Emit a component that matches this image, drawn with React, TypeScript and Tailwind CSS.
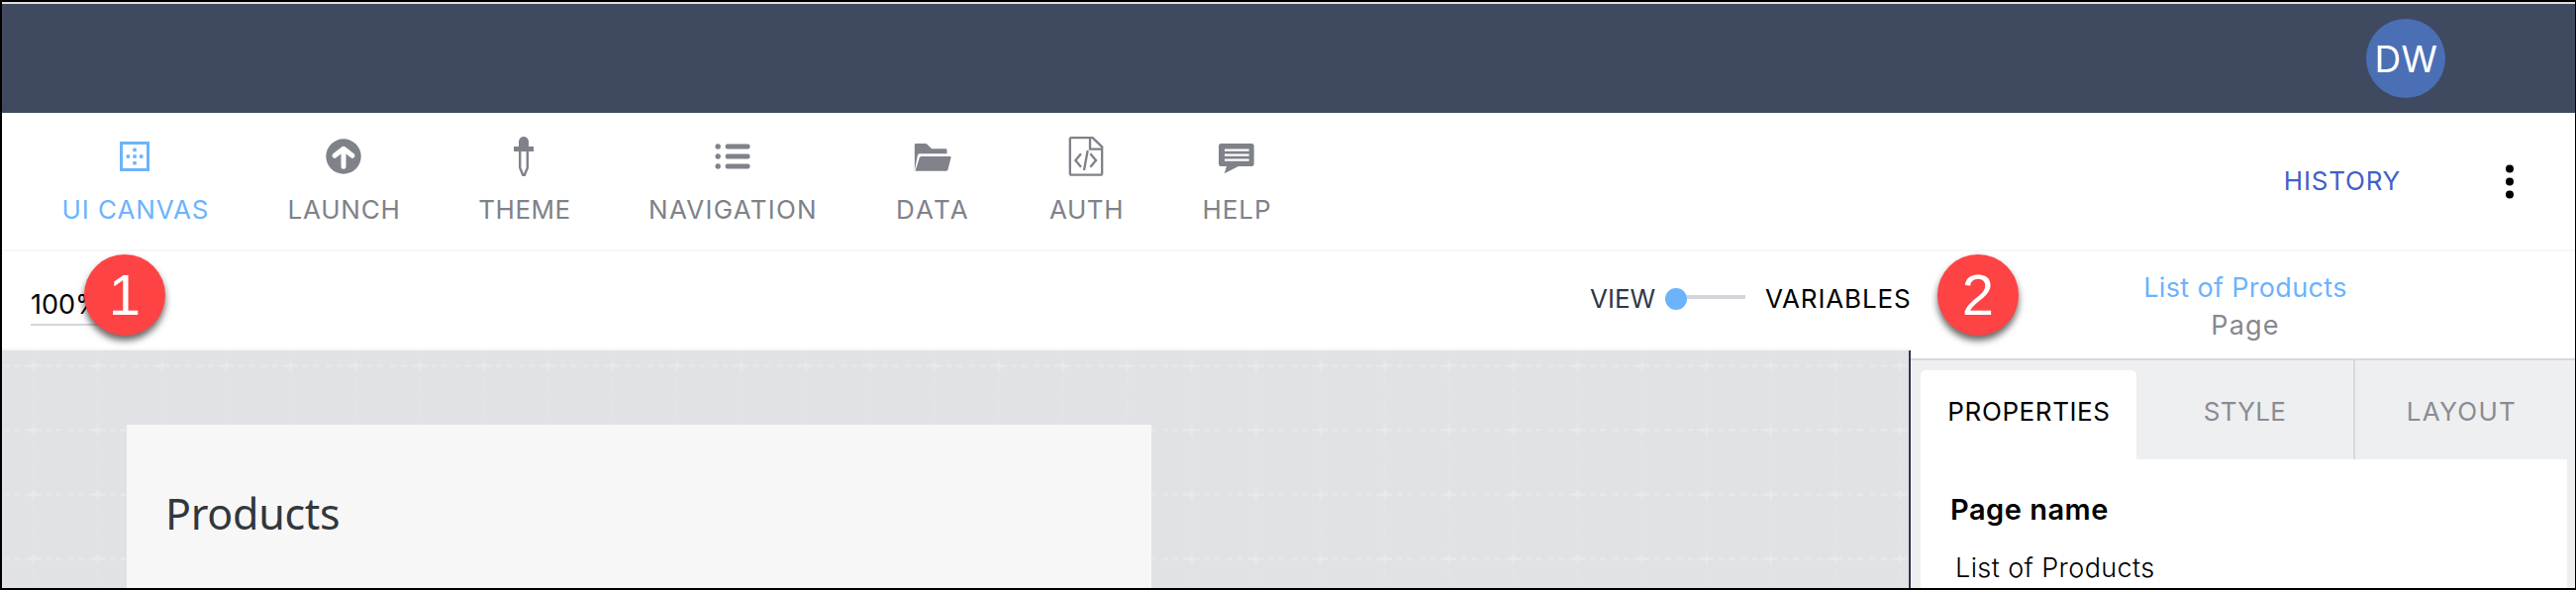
import type { ReactNode } from 'react';

const grey = '#7f8289';

function Icon({ children }: { children: ReactNode }) {
  return (
    <svg width="40" height="40" viewBox="0 0 40 40" fill="none" className="shrink-0">
      {children}
    </svg>
  );
}

const canvasIcon = (
  <Icon>
    <rect x="6.5" y="6.5" width="27" height="27" stroke="#6db3fb" strokeWidth="3" />
    <g fill="#6db3fb">
      <rect x="18.3" y="11.6" width="3.5" height="3.5" />
      <rect x="11.6" y="18.3" width="3.5" height="3.5" />
      <rect x="18.3" y="18.3" width="3.5" height="3.5" />
      <rect x="25" y="18.3" width="3.5" height="3.5" />
      <rect x="18.3" y="25" width="3.5" height="3.5" />
    </g>
  </Icon>
);

const launchIcon = (
  <Icon>
    <circle cx="20" cy="20" r="17.7" fill={grey} />
    <path d="M11 19.3 20 12.3 29 19.3M20 13V30.3" stroke="#fff" strokeWidth="5" strokeLinecap="round" strokeLinejoin="round" />
  </Icon>
);

const themeIcon = (
  <Icon>
    <path d="M10 10H15V5a5 5 0 0 1 10 0V10H30V15H10Z" fill={grey} />
    <path d="M16.2 14V31.5L19.2 38.8H20.8L23.8 31.5V14" stroke={grey} strokeWidth="2.4" />
  </Icon>
);

const navigationIcon = (
  <Icon>
    <g fill={grey}>
      <circle cx="5.2" cy="10" r="2.7" />
      <circle cx="5.2" cy="20" r="2.7" />
      <circle cx="5.2" cy="30" r="2.7" />
      <rect x="12.7" y="7.4" width="24.8" height="5.2" rx="2" />
      <rect x="12.7" y="17.4" width="24.8" height="5.2" rx="2" />
      <rect x="12.7" y="27.4" width="24.8" height="5.2" rx="2" />
    </g>
  </Icon>
);

const dataIcon = (
  <Icon>
    <g transform="scale(.33333) translate(-127.5 -84)" fill={grey}>
      <path d="M133 188V109Q133 105 137 105H166Q169 105 171 107L185 121H227Q231 121 231 125V136H148Q143 136 142 141L134 182Z" />
      <path d="M154 144H240Q244 144 243 148L234 184Q233 188 229 188H135L148 148Q150 144 154 144Z" />
    </g>
  </Icon>
);

const authIcon = (
  <Icon>
    <g transform="scale(.33333) translate(-592 -84)" stroke={grey} strokeWidth="7">
      <path d="M607 87.500H672L700.500 115V195Q700.500 200 695 200H608Q603.500 200 603.500 195V92Q603.500 87.500 607 87.500Z" />
      <path d="M664 88V122H700" />
      <path d="M637 136 620 156 637 176M665 136 682 156 665 176M657 126 646 186" />
    </g>
  </Icon>
);

const helpIcon = (
  <Icon>
    <g transform="scale(.33333) translate(-1047 -84)">
      <path d="M1060 105H1153Q1160 105 1160 112V167Q1160 174 1153 174H1113L1070 196 1077 174H1060Q1053 174 1053 167V112Q1053 105 1060 105Z" fill={grey} />
      <path d="M1071 125H1145M1071 140H1145M1071 155H1145" stroke="#fff" strokeWidth="7" />
    </g>
  </Icon>
);

const tools = [
  { label: 'UI CANVAS', icon: canvasIcon, cls: 'w-[148px] tracking-[0.94px] text-[#6db3fb]' },
  { label: 'LAUNCH', icon: launchIcon, cls: 'w-[113px] tracking-[0.79px] text-[#7f8289]' },
  { label: 'THEME', icon: themeIcon, cls: 'w-[92px] tracking-[0.5px] text-[#7f8289]' },
  { label: 'NAVIGATION', icon: navigationIcon, cls: 'w-[169px] tracking-[1.24px] text-[#7f8289]' },
  { label: 'DATA', icon: dataIcon, cls: 'w-[75px] tracking-[2.2px] text-[#7f8289]' },
  { label: 'AUTH', icon: authIcon, cls: 'w-[75px] tracking-[0.58px] text-[#7f8289]' },
  { label: 'HELP', icon: helpIcon, cls: 'w-[69px] tracking-[0.88px] text-[#7f8289]' },
];

function Badge({ n, cls }: { n: number; cls: string }) {
  return (
    <div
      className={`absolute top-[255px] flex h-[82px] w-[82px] items-center justify-center rounded-full bg-[#fe4344] font-['Liberation_Sans',sans-serif] text-[58px] leading-none text-white shadow-[0_5px_7px_rgba(0,0,0,0.6)] ${cls}`}
    >
      {n}
    </div>
  );
}

function CanvasGrid() {
  return (
    <svg className="absolute inset-0 h-full w-full">
      <defs>
        <pattern id="grid" width="65" height="65" patternUnits="userSpaceOnUse" x="-0.7" y="-17">
          <path d="M0 32.500H65" stroke="#e7e8ea" strokeWidth="2.500" strokeDasharray="6 4.400" strokeDashoffset="-3" />
          <path d="M32.500 0V65" stroke="#e5e6e7" strokeWidth="2" strokeDasharray="5 5.400" strokeDashoffset="-3" />
          <path d="M29 32.500H36M32.500 29V36" stroke="#e8e9eb" strokeWidth="3" />
        </pattern>
      </defs>
      <rect width="100%" height="100%" fill="url(#grid)" />
    </svg>
  );
}

export default function App() {
  return (
    <div className="relative flex h-[596px] w-[2602px] flex-col overflow-hidden border-y-2 border-r border-l-2 border-black bg-white font-['Inter',sans-serif] text-[26px] leading-[32px]">
      <header className="flex h-[112px] shrink-0 justify-end border-t-2 border-[#dcdedb] bg-[#3f4a60] pt-[15px] pr-[131px]">
        <div className="flex h-20 w-20 items-center justify-center rounded-full bg-[#4b6fb5] pt-px pl-px text-[37px] tracking-[0.5px] text-white">
          DW
        </div>
      </header>

      <nav className="flex h-[140px] shrink-0 border-b-2 border-[#f7f7f8] pl-[60px]">
        <div className="flex gap-20 pt-6">
          {tools.map((t) => (
            <div key={t.label} className={`flex flex-col items-center gap-[18px] whitespace-nowrap ${t.cls}`}>
              {t.icon}
              <span className="pl-0.5">{t.label}</span>
            </div>
          ))}
        </div>
        <div className="ml-auto flex pr-[60px]">
          <span className="mt-[53px] mr-[104px] tracking-[0.79px] text-[#3f61c9]">HISTORY</span>
          <svg width="12" height="40" viewBox="0 0 12 40" className="mt-[49px]">
            <circle cx="6" cy="7.500" r="4" />
            <circle cx="6" cy="20.500" r="4" />
            <circle cx="6" cy="33.500" r="4" />
          </svg>
        </div>
      </nav>

      <div className="flex min-h-0 flex-1">
        <main className="flex w-[1928px] shrink-0 flex-col">
          <div className="flex h-[100px] shrink-0 items-start border-b-2 border-[#f5f7f8] pl-[29px] text-black">
            <div className="mt-[27px] h-12 w-[120px] border-b-2 border-[#d5d6dd] pt-[10px] text-[27px] leading-[34px]">
              100%
            </div>
            <div className="ml-auto flex pt-8">
              <span className="w-[76px] text-[#2f364a]">VIEW</span>
              <div className="mt-[5px] mr-5 flex h-[22px] w-[81px] items-center">
                <div className="h-[22px] w-[22px] rounded-full bg-[#6db3fb]" />
                <div className="mb-1 h-1 flex-1 bg-[#d5d6dd]" />
              </div>
              <span className="w-[147px] tracking-[0.86px]">VARIABLES</span>
            </div>
          </div>
          <div className="relative flex-1 border-r-2 border-[#2f364a] bg-[#e1e2e6] pt-[75px] pl-[126px]">
            <CanvasGrid />
            <div className="relative h-full w-[1035px] bg-[#f7f7f7] pt-[64px] pl-[39px] font-['Noto_Sans',sans-serif] text-[43px] leading-[52px] tracking-[-0.3px] text-[#32373c]">
              Products
            </div>
          </div>
        </main>

        <aside className="flex flex-1 flex-col bg-[#eeeff1]">
          <div className="flex h-[110px] shrink-0 flex-col items-center border-b-2 border-[#d7d9dc] bg-white pt-[18px] pl-[5px] text-[27px] leading-[38px]">
            <span className="tracking-[0.34px] text-[#6db3fb]">List of Products</span>
            <span className="tracking-[1.15px] text-[#85888f]">Page</span>
          </div>
          <div className="flex h-[100px] shrink-0 pr-2 pl-[10px] text-center text-[#8a8c93]">
            <div className="mt-[10px] w-[218px] rounded-t-[5px] bg-white pt-[26px] pl-px tracking-[0.6px] text-black">PROPERTIES</div>
            <div className="w-[221px] border-r-2 border-[#d7d9dc] pt-[36px] tracking-[0.3px]">STYLE</div>
            <div className="flex-1 pt-[36px] pl-px tracking-[1.32px]">LAYOUT</div>
          </div>
          <div className="mr-2 ml-[10px] flex-1 bg-white pt-8 pl-[30px] text-black">
            <div className="text-[29px] leading-[38px] font-semibold tracking-[0.5px]">Page name</div>
            <div className="mt-[21px] pl-[5px] text-[27px] leading-[38px] font-light tracking-[0.4px]">List of Products</div>
          </div>
        </aside>
      </div>

      <Badge n={1} cls="left-[83px]" />
      <Badge n={2} cls="left-[1955px]" />
    </div>
  );
}
